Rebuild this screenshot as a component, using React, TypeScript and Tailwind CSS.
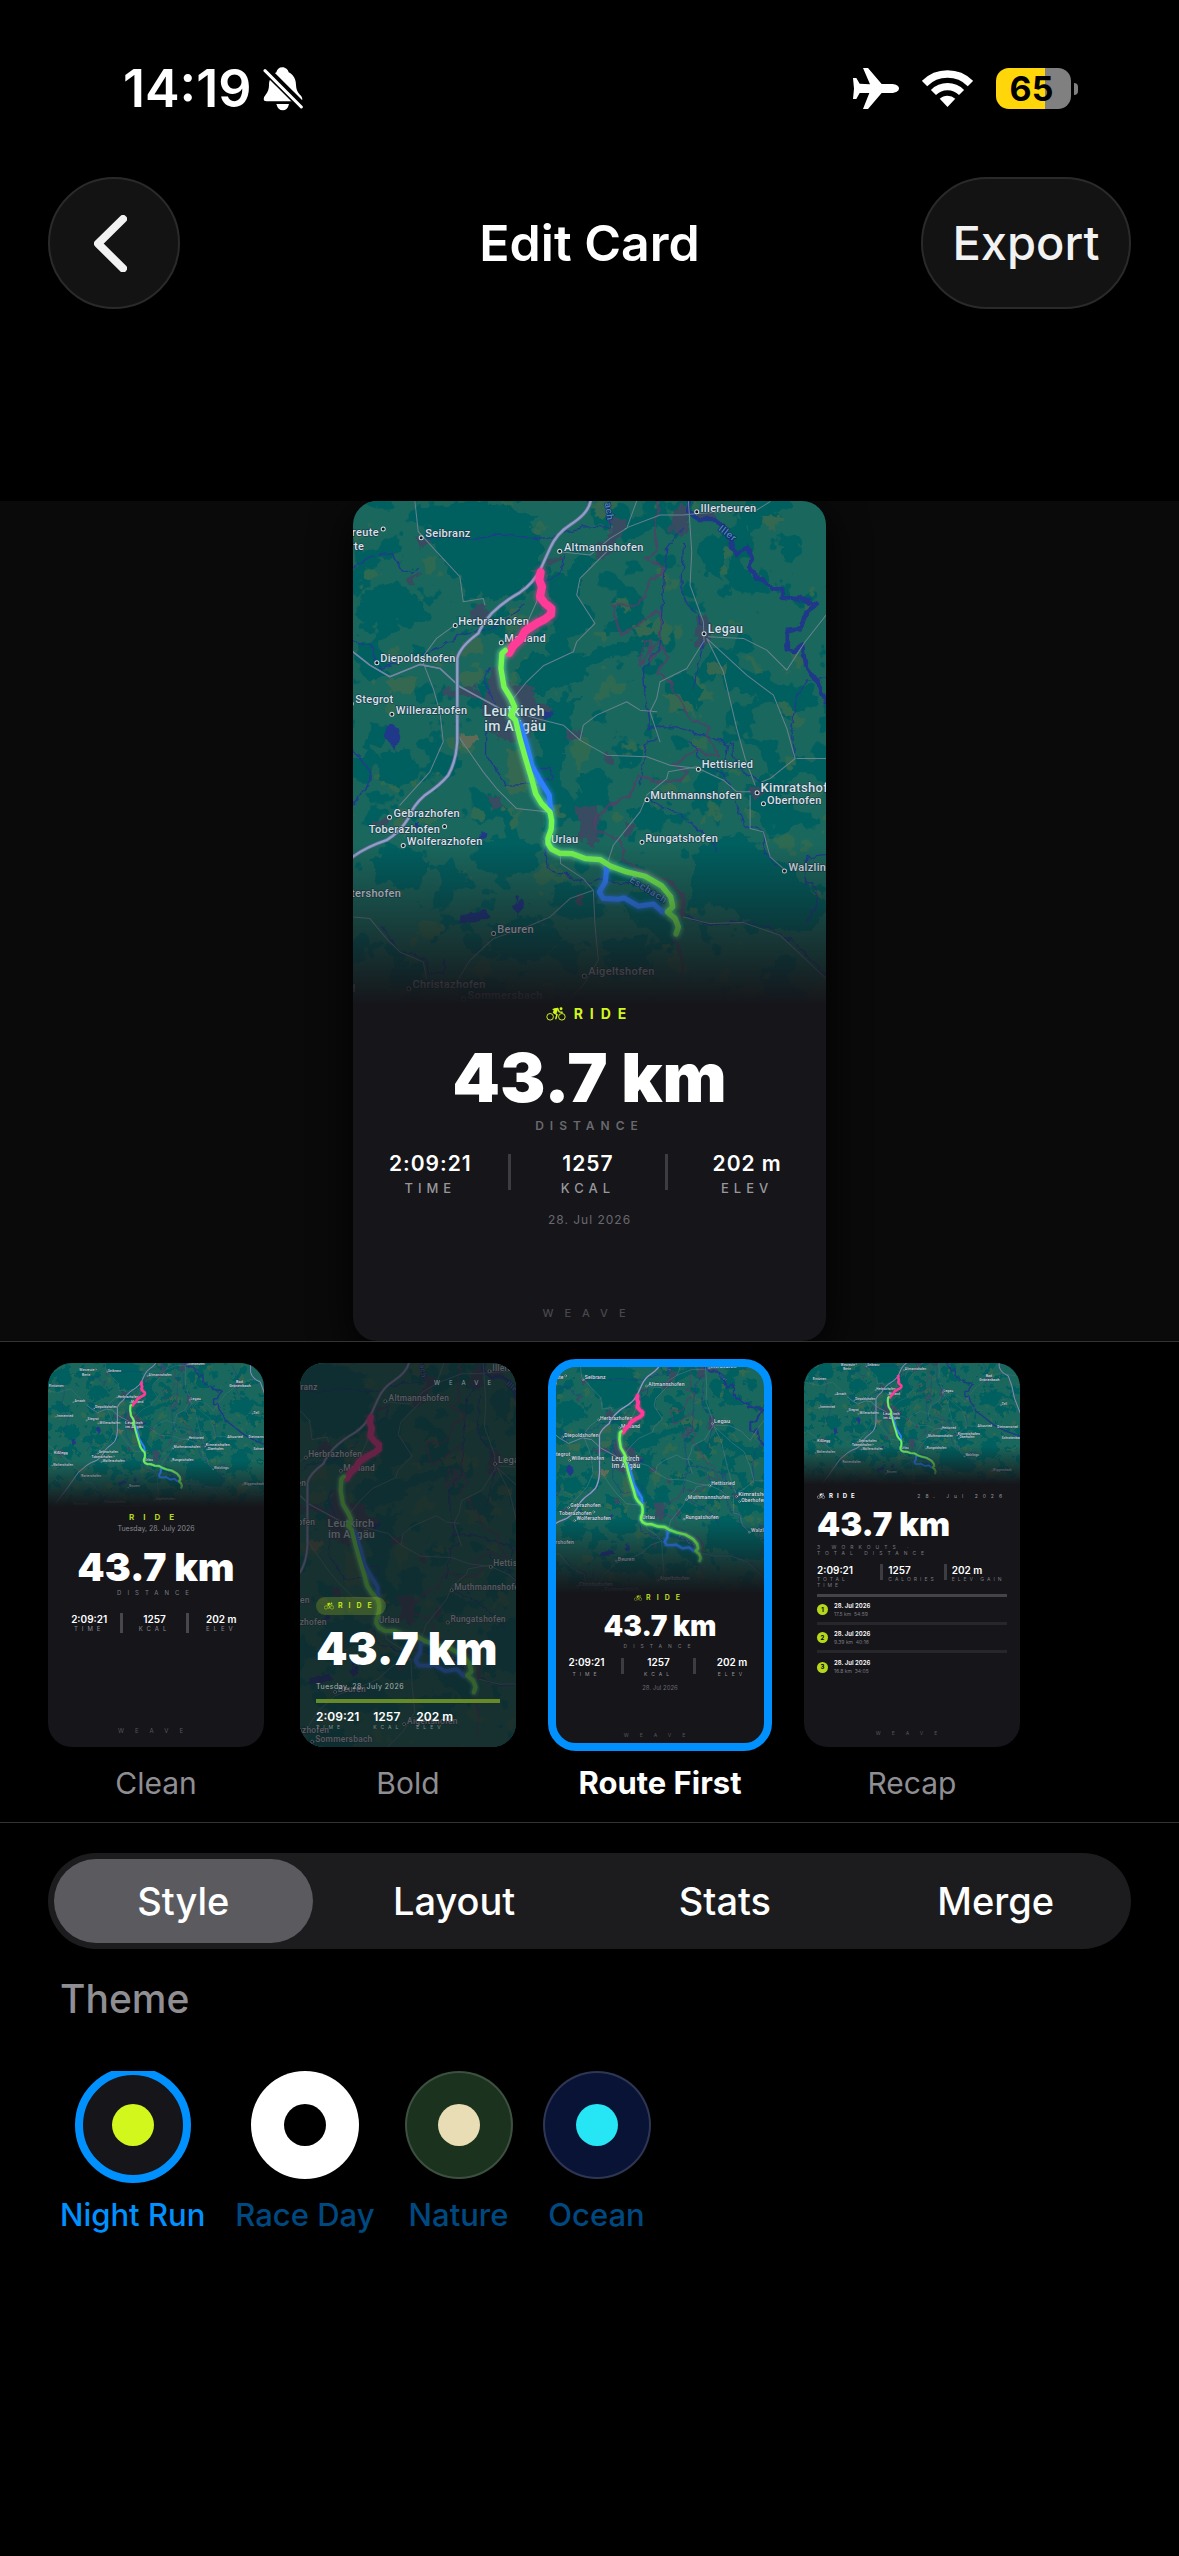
import { useState } from 'react';
import clsx from 'clsx';

type TemplateId = 'clean' | 'bold' | 'route' | 'recap';
type Place = { x: number; y: number; name: string; size?: number; end?: boolean; dot?: [number, number] };

const TABS = ['Style', 'Layout', 'Stats', 'Merge'];

const THEMES = [
  { name: 'Night Run', bg: 'bg-[#15151a]', dot: 'bg-[#d2f71d]' },
  { name: 'Race Day', bg: 'bg-white', dot: 'bg-black' },
  { name: 'Nature', bg: 'bg-[#1b321e]', dot: 'bg-[#e9ddb5]' },
  { name: 'Ocean', bg: 'bg-[#091335]', dot: 'bg-[#26e6f5]' }
];

const STATS = [
  { value: '2:09:21', label: 'TIME', long: ['TOTAL', 'TIME'] },
  { value: '1257', label: 'KCAL', long: ['CALORIES'] },
  { value: '202 m', label: 'ELEV', long: ['ELEV GAIN'] }
];

const WORKOUTS = [
  { date: '28. Jul 2026', km: '17.5 km', time: '54:59' },
  { date: '28. Jul 2026', km: '9.39 km', time: '40:16' },
  { date: '28. Jul 2026', km: '16.8 km', time: '34:05' }
];

const FORESTS = [
  'M235,60 L330,20 470,30 560,60 540,110 590,140 560,230 510,280 430,320 400,300 350,320 330,250 270,190 235,150Z',
  'M570,260 L640,230 700,180 740,190 690,260 690,310 740,370 700,420 640,430 600,390 620,340Z',
  'M500,520 L560,470 680,480 780,450 900,420 890,470 780,480 700,540 620,590 560,600 520,580Z',
  'M560,640 L640,620 700,600 660,660 640,800 590,800 560,720Z',
  'M40,280 L130,260 200,300 240,370 180,400 100,360 60,400 20,360Z',
  'M850,70 L900,60 920,100 860,120 840,100Z',
  'M1040,140 L1100,110 1130,190 1110,260 1060,230Z',
  'M1180,30 L1260,20 1270,70 1200,110 1170,80Z',
  'M1290,130 L1340,140 1345,190 1300,195Z',
  'M1080,500 L1140,460 1180,520 1260,540 1280,620 1200,600 1120,570Z',
  'M960,560 L1010,520 1060,580 1040,640 980,620Z',
  'M690,840 L740,810 780,850 770,910 700,920 680,880Z',
  'M830,950 L900,930 960,960 930,1010 860,1000Z',
  'M380,1040 L480,1020 570,1060 560,1130 440,1140 370,1100Z',
  'M60,1080 L180,1060 240,1110 200,1180 90,1160Z',
  'M620,1160 L740,1180 760,1260 660,1280 600,1230Z',
  'M860,1180 L940,1220 920,1290 840,1270 810,1220Z',
  'M1040,1060 L1160,1010 1260,1080 1340,1130 1420,1230 1380,1310 1240,1300 1120,1240 1020,1200Z',
  'M1180,880 L1240,840 1300,880 1280,950 1200,940Z',
  'M420,1290 L560,1260 640,1330 560,1400 440,1390Z',
  'M760,1340 L880,1320 900,1420 800,1460Z',
  'M90,780 L180,760 210,830 150,880 80,850Z',
  'M-320,120 L-220,80 -140,160 -180,260 -300,240Z',
  'M-240,700 L-120,660 -60,760 -130,840 -220,800Z',
  'M1520,420 L1660,380 1720,480 1640,580 1530,520Z',
  'M1480,980 L1600,940 1700,1040 1640,1160 1500,1120Z'
];

const MEADOWS = [
  'M730,35 L790,25 785,60 740,75Z',
  'M330,440 L390,430 400,470 340,480Z',
  'M470,340 L510,345 505,372 465,370Z',
  'M790,320 L830,305 845,340 810,352Z',
  'M100,555 L200,545 190,600 130,590Z',
  'M330,540 L400,520 395,570 340,580Z',
  'M470,760 L540,765 530,890 475,900Z',
  'M1070,510 L1120,500 1125,535 1080,540Z',
  'M940,590 L1010,610 1025,655 960,640Z',
  'M1240,55 L1300,70 1280,110 1240,90Z',
  'M850,400 L900,380 905,420 860,430Z',
  'M140,940 L175,950 165,1030 140,1010Z',
  'M1540,1300 L1640,1260 1660,1360 1560,1380Z'
];

const TOWNS = [
  'M780,65 L815,70 825,110 790,140 770,190 730,185 745,150 785,120Z',
  'M980,40 L1010,25 1015,100 990,130 960,95Z',
  'M1030,50 L1070,40 1100,65 1060,85Z',
  'M200,120 L230,125 235,150 205,155Z',
  'M585,200 L620,180 640,165 640,185 600,215Z',
  'M360,345 L400,325 420,360 390,400 365,380Z',
  'M420,520 L455,510 480,580 530,570 560,620 600,630 580,670 520,740 440,730 390,640 415,600Z',
  'M290,585 L370,575 395,620 330,600 290,610Z',
  'M1045,360 L1075,365 1085,430 1060,455 1035,440Z',
  'M650,700 L690,705 695,730 655,740Z',
  'M410,910 L460,900 465,935 430,950Z',
  'M680,935 L745,930 750,985 735,1050 690,1025Z',
  'M820,985 L855,990 845,1015 820,1020Z',
  'M1200,880 L1235,870 1235,910 1205,915Z',
  'M680,1200 L710,1200 700,1235 675,1220Z',
  'M755,775 L790,770 785,800 765,800Z',
  'M170,250 L210,230 205,245 185,275Z',
  'M75,975 L125,965 115,990 80,1000Z',
  'M-290,930 L-240,920 -220,990 -280,1000Z',
  'M1540,230 L1590,220 1600,280 1550,290Z'
];

const LAKES = [
  'M108,700 L130,688 152,720 140,770 118,740 105,725Z',
  'M335,1260 L410,1242 420,1262 390,1280 332,1284Z',
  'M485,1235 L515,1210 522,1240 500,1262Z',
  'M570,648 L610,652 590,675Z',
  'M388,1012 L410,1010 405,1030 390,1038Z',
  'M492,1203 L508,1205 500,1222Z',
  'M195,990 L208,980 206,1010Z',
  'M-150,820 L-120,815 -100,860 -140,880Z'
];

const STREAMS = [
  'M780,18 L778,100 700,95 640,115 570,132 500,122 430,120 370,130 300,122 225,130',
  'M9,220 L60,185 130,172 150,220 185,235 205,220',
  'M640,180 L635,230 605,250 570,265',
  'M9,440 L60,445 90,520 140,505 200,490 330,420 430,400 520,330',
  'M1000,100 L950,160 945,220 935,350 930,450 880,520 885,600 900,700 960,690 1040,715 1090,725 1135,750 1130,790',
  'M1000,145 L995,300 1060,390 M1060,440 L1030,580',
  'M1428,550 L1370,555 1340,600 1325,700 1335,790',
  'M420,515 L400,560 440,630 M410,690 L410,780 470,870 560,868 610,850 600,820 560,820',
  'M580,1030 L595,1120 650,1140 720,1165 750,1150 830,1165',
  'M1020,740 L1050,790 1120,840 1150,890 1180,990 1240,1005 1240,1060 1280,1110',
  'M1140,740 L1165,820 1230,860 M870,870 L890,740 920,735',
  'M895,915 L990,960 1060,1010 1100,1065',
  'M1428,1078 L1370,1085 1360,1160 1400,1180 1400,1230 1370,1280',
  'M9,765 L60,820 60,870 9,930',
  'M1010,1265 L1080,1290 1170,1280 1250,1295 1340,1350 1428,1440',
  'M100,1300 L150,1370 230,1390 235,1430 280,1440 285,1390',
  'M-300,200 L-220,320 -250,480 -180,600 -240,760',
  'M1500,60 L1560,180 1540,320 1620,420'
];

const ROADS = [
  'M195,18 L205,110 260,170 330,245 340,320 400,310 405,330',
  'M9,470 L60,510 120,545 210,508 270,520 330,575 440,635 560,670 640,690 690,735 700,690 740,660 830,620 870,645 920,650',
  'M315,390 L260,430 215,490 250,580 270,650 280,740 240,830 150,930',
  'M570,240 L560,320 520,410 M630,170 L720,180 780,130 830,100 860,18',
  'M780,160 L690,250 680,300 735,385 680,440 670,470 580,512 530,560 490,610',
  'M1015,18 L1025,170 1020,270 1060,380 1062,440',
  'M825,100 L930,60 1000,60 1050,55 1220,45 1260,20',
  'M1075,425 L1180,430 1250,465 1310,525 1365,440 1428,360',
  'M1070,430 L1120,530 1160,700 1185,790 1215,870 M1070,430 L1190,540 1270,600 1310,700 1335,790 1260,850 1235,860',
  'M1060,440 L1010,520 930,560 920,610 900,650 930,740',
  'M690,735 L770,780 890,785 960,810 1045,820 1120,855 1160,890 1200,890',
  'M890,905 L870,950 790,1050 770,1110 M890,900 L950,850 955,830 1040,815',
  'M330,730 L400,830 440,880 500,940 590,950',
  'M630,1070 L632,1105 700,1150 730,1185 735,1290 745,1395 700,1470 640,1530',
  'M730,1185 L660,1210 600,1265 530,1295 430,1330 360,1395 320,1460',
  'M9,1265 L60,1270 110,1330 150,1370 220,1400 230,1450',
  'M1428,790 L1340,790 M1200,900 L1200,1000 1240,1010 1260,1085 1300,1120',
  'M1000,1265 L1080,1285 1180,1282 1290,1320 1428,1450',
  'M-478,300 L-300,340 -160,300 9,470 M-478,820 L-280,960 -120,1100 9,1265',
  'M1428,360 L1560,260 1700,200 1922,240 M1440,1450 L1620,1360 1780,1400 1922,1340'
];

const BORDERS = [
  'M925,18 L915,110 920,170 880,190 935,210 940,240 895,260 890,300 850,330 785,325 800,380 810,420 860,390 915,350 930,350 930,430 870,510 880,440 905,430 900,500 935,450 955,490 920,530 960,560 1000,630 1030,680 1070,690 1085,750 1110,790 1040,765 970,810 1010,830 990,855 910,860 860,835 860,860 840,900 780,930 735,970 735,1010 790,1020 820,1050 815,1095 900,1140 960,1160 1000,1200 1000,1260 975,1290 975,1340 1000,1400 985,1490'
];

const MOTORWAY =
  'M722,18 C715,50 690,70 660,90 Q620,115 600,160 L572,222 Q550,265 510,292 Q460,320 425,355 Q395,390 385,415 Q330,455 322,490 L322,740 Q318,800 295,840 Q270,870 225,900 Q190,930 175,970 Q150,1010 110,1035 Q50,1055 9,1085 L-80,1160 -200,1330 -303,1465 -340,1532';

const MOTORWAY_EAST = 'M1690,18 L1690,130 Q1710,200 1790,230 L1830,340 1860,480 1922,640';

const ILLER =
  'M1015,18 L1015,50 1050,75 1100,75 1135,120 1160,180 1190,150 1205,190 1200,225 1250,270 1300,285 1295,305 1345,310 1395,325 1360,370 1350,400 1310,405 1310,460 1335,465 1355,450 1365,510 1410,570 1428,620 1520,690 1628,776 1765,845 1922,900';

const TRACK_PINK =
  'M572,232 L568,255 576,275 570,305 585,325 604,340 603,358 585,372 560,385 525,408 512,432 490,452 478,473';

const TRACK_BLUE = [
  'M497,672 L512,690 530,750 545,810 570,855 598,900 602,945',
  'M770,1118 L766,1160 748,1190 760,1210 805,1212 822,1208 865,1233 910,1226 937,1250'
];

const TRACK_GREEN =
  'M466,466 L456,475 453,520 462,575 483,610 494,635 482,660 497,675 510,730 527,790 545,850 557,895 575,925 600,950 605,975 604,1000 594,1030 594,1045 605,1062 628,1074 665,1075 705,1090 750,1093 780,1112 830,1130 885,1143 935,1172 962,1205 968,1235 952,1250 975,1270 985,1295 978,1316';

const PLACES: Place[] = [
  { x: 226, y: 126, name: 'Seibranz', dot: [214, 128] },
  { x: 87, y: 122, name: 'Wiesreute', end: true, dot: [100, 102] },
  { x: 43, y: 165, name: 'Berte', end: true },
  { x: 642, y: 168, name: 'Altmannshofen', dot: [629, 169] },
  { x: 1051, y: 51, name: 'Illerbeuren', dot: [1040, 50] },
  { x: 1073, y: 414, name: 'Legau', size: 37, dot: [1062, 416] },
  { x: 325, y: 390, name: 'Herbrazhofen', dot: [316, 391] },
  { x: 463, y: 442, name: 'Mailand', dot: [454, 443] },
  { x: 91, y: 502, name: 'Diepoldshofen', dot: [81, 503] },
  { x: 16, y: 625, name: 'Stegrot', dot: [4, 626] },
  { x: 138, y: 657, name: 'Willerazhofen', dot: [126, 657] },
  { x: 401, y: 663, name: 'Leutkirch', size: 42 },
  { x: 403, y: 707, name: 'im Allgäu', size: 42 },
  { x: 1055, y: 820, name: 'Hettisried', dot: [1045, 822] },
  { x: 1231, y: 891, name: 'Kimratshofen', size: 39, dot: [1221, 893] },
  { x: 1251, y: 926, name: 'Oberhofen', dot: [1240, 926] },
  { x: 901, y: 912, name: 'Muthmannshofen', dot: [891, 914] },
  { x: 886, y: 1040, name: 'Rungatshofen', dot: [876, 1041] },
  { x: 131, y: 965, name: 'Gebrazhofen', dot: [119, 966] },
  { x: 271, y: 1012, name: 'Toberazhofen', end: true, dot: [284, 994] },
  { x: 171, y: 1050, name: 'Wolferazhofen', dot: [160, 1051] },
  { x: 603, y: 1043, name: 'Urlau' },
  { x: 1315, y: 1126, name: 'Walzlings', dot: [1303, 1127] },
  { x: 154, y: 1205, name: 'Rattershofen', end: true },
  { x: 442, y: 1314, name: 'Beuren', dot: [431, 1315] },
  { x: 715, y: 1440, name: 'Aigeltshofen', dot: [703, 1442] },
  { x: 188, y: 1478, name: 'Christazhofen', dot: [177, 1480] },
  { x: 353, y: 1512, name: 'Sommersbach', dot: [341, 1511] },
  { x: 18, y: 1490, name: 'Eisenried', end: true },
  { x: -120, y: 440, name: 'Arnach', dot: [-132, 438] },
  { x: -300, y: 590, name: 'Immenried', dot: [-312, 588] },
  { x: -330, y: 970, name: 'Kißlegg', size: 40 },
  { x: -340, y: 1090, name: 'Waltershofen', dot: [-352, 1088] },
  { x: -380, y: 280, name: 'Eintürnen' },
  { x: 1540, y: 240, name: 'Bad', size: 40 },
  { x: 1470, y: 285, name: 'Grönenbach', size: 40 },
  { x: 1720, y: 560, name: 'Zell', dot: [1708, 558] },
  { x: 1450, y: 805, name: 'Altusried', size: 38 },
  { x: 1670, y: 810, name: 'Dietmannsried' },
  { x: 1720, y: 930, name: 'Schrattenbach' },
  { x: 1620, y: 1290, name: 'Wiggensbach', dot: [1608, 1288] }
];

type View = [number, number, number, number];

const CARD_VIEW: View = [9, 18, 1419, 1514];
const WIDE_VIEW: View = [-391, 18, 2219, 1514];
const RECAP_VIEW: View = [-478, 89, 2400, 1355];

/* Stylised route map. Cards crop it from the centre with "slice". */
function RouteMap({ className, view = CARD_VIEW }: { className?: string; view?: View }) {
  const [left, , width] = view;
  const places = PLACES.filter(p => p.x > left && p.x < left + width);

  return (
    <svg
      viewBox={view.join(' ')}
      preserveAspectRatio="xMidYMid slice"
      className={clsx('block w-full', className)}
      aria-label="Route map"
      role="img"
      fill="none"
      strokeLinejoin="round"
      strokeLinecap="round"
    >
      <defs>
        <filter id="woods" x="0" y="0" width="100%" height="100%" colorInterpolationFilters="sRGB">
          <feTurbulence type="fractalNoise" baseFrequency="0.009" numOctaves="4" seed="7" />
          <feColorMatrix values="0 0 0 0 0  0 0 0 0 0.375  0 0 0 0 0.375  40 0 0 0 -23.2" />
        </filter>
        <filter id="fields" x="0" y="0" width="100%" height="100%" colorInterpolationFilters="sRGB">
          <feTurbulence type="fractalNoise" baseFrequency="0.011" numOctaves="4" seed="23" />
          <feColorMatrix values="0 0 0 0 0.18  0 0 0 0 0.41  0 0 0 0 0.32  30 0 0 0 -20.6" />
        </filter>
        <filter id="rough" colorInterpolationFilters="sRGB">
          <feTurbulence type="fractalNoise" baseFrequency="0.03" numOctaves="3" seed="3" />
          <feDisplacementMap in="SourceGraphic" scale="46" xChannelSelector="R" yChannelSelector="G" />
        </filter>
        <filter id="wobble" colorInterpolationFilters="sRGB">
          <feTurbulence type="fractalNoise" baseFrequency="0.035" numOctaves="2" seed="11" />
          <feDisplacementMap in="SourceGraphic" scale="22" xChannelSelector="R" yChannelSelector="G" />
        </filter>
        <filter id="glow" x="-20%" y="-20%" width="140%" height="140%">
          <feGaussianBlur stdDeviation="7" />
        </filter>
      </defs>

      <rect x="-500" y="0" width="2440" height="1560" fill="#1a675d" />
      <rect x="-500" y="0" width="2440" height="1560" filter="url(#woods)" />
      <rect x="-500" y="0" width="2440" height="1560" filter="url(#fields)" />
      <g filter="url(#rough)">
        <path d={FORESTS.join(' ')} fill="#005f5f" />
        <path d={MEADOWS.join(' ')} fill="#346851" />
        <path d={TOWNS.join(' ')} fill="#384b60" />
        <path d="M330,715 L385,712 388,745 350,760 325,750Z" fill="#5f6b57" />
      </g>

      <g filter="url(#wobble)">
        <path d={LAKES.join(' ')} fill="#1f3889" />
        <path d={STREAMS.join(' ')} stroke="#1f3c8c" strokeWidth="4" />
        <path d={ILLER} stroke="#1f3889" strokeWidth="14" />
        <path d={BORDERS.join(' ')} stroke="#553f68" strokeWidth="7" opacity="0.75" />
      </g>
      <path d={ROADS.join(' ')} stroke="#68828e" strokeWidth="3" />
      <path d="M9,470 L60,510 120,545 210,508 270,520 330,575 440,635" stroke="#7486a4" strokeWidth="5" />
      <path d={MOTORWAY + ' ' + MOTORWAY_EAST} stroke="#53698c" strokeWidth="12" />
      <path d={MOTORWAY + ' ' + MOTORWAY_EAST} stroke="#919fc6" strokeWidth="7" />

      <g fontFamily="Roboto, sans-serif" fontWeight="500">
        {places.map(p => (
          <g key={p.name}>
            {p.dot && (
              <circle cx={p.dot[0]} cy={p.dot[1]} r="6" fill="#10181c" stroke="#d5dde3" strokeWidth="3" />
            )}
            <text
              x={p.x}
              y={p.y}
              fontSize={p.size ?? 33}
              textAnchor={p.end ? 'end' : 'start'}
              letterSpacing="1"
              fill="#d9e1e6"
              stroke="#1d3f4d"
              strokeWidth="4"
              paintOrder="stroke"
            >
              {p.name}
            </text>
          </g>
        ))}
        <g fontSize="30" fill="#4d84c4" stroke="#0d2c55" strokeWidth="4" paintOrder="stroke" letterSpacing="2">
          <text transform="translate(764 24) rotate(82)">ach</text>
          <text transform="translate(1103 104) rotate(38)">Iller</text>
          <text transform="translate(836 1158) rotate(32)">Eschach</text>
        </g>
      </g>

      <g filter="url(#glow)" opacity="0.65">
        <path d={TRACK_PINK} stroke="#ff3b97" strokeWidth="30" />
        <path d={TRACK_BLUE.join(' ')} stroke="#2f80ff" strokeWidth="22" />
        <path d={TRACK_GREEN} stroke="#6ff0a0" strokeWidth="26" />
      </g>
      <path d={TRACK_BLUE.join(' ')} stroke="#2f80ff" strokeWidth="15" />
      <path d={TRACK_PINK} stroke="#ff3b97" strokeWidth="24" />
      <path d={TRACK_GREEN} stroke="#74f550" strokeWidth="16" />
    </svg>
  );
}

/* Map that fades into the card body */
function FadedMap({ className, view }: { className?: string; view?: View }) {
  return (
    <div className="relative">
      <RouteMap className={className} view={view} />
      <div className="absolute inset-0 bg-linear-to-b from-transparent from-68% to-[#15151a]" />
    </div>
  );
}

function RideIcon({ className }: { className?: string }) {
  return (
    <svg viewBox="0 0 28 20" className={className} fill="none" stroke="currentColor" aria-hidden="true">
      <circle cx="5.6" cy="14" r="4.7" strokeWidth="1.4" />
      <circle cx="22.4" cy="14" r="4.7" strokeWidth="1.4" />
      <path d="M10 3.4 L16.2 2.2 L18.6 7 L22.8 7.4" strokeWidth="2" strokeLinecap="round" strokeLinejoin="round" />
      <path d="M11 8 L15.4 11 L13.8 16.6" strokeWidth="2.2" strokeLinecap="round" strokeLinejoin="round" />
      <path d="M11.6 2.6 L17 1.8 L14.6 8.6 L10 8.2Z" fill="currentColor" strokeWidth="0.8" strokeLinejoin="round" />
      <circle cx="21.2" cy="2.5" r="2.1" fill="currentColor" stroke="none" />
    </svg>
  );
}

function RouteCard() {
  return (
    <article className="flex h-[840px] w-[473px] flex-col overflow-hidden rounded-3xl bg-[#15151a] shadow-[0_12px_40px_black]">
      <FadedMap className="h-[505px]" />
      <div className="flex h-4 items-center justify-center gap-2 text-[#d2f71d]">
        <RideIcon className="h-3.5 w-5" />
        <span className="text-[14px] leading-4 font-bold tracking-[7px]">RIDE</span>
      </div>
      <p className="mt-5 text-center text-[68px] leading-[70px] font-black">43.7 km</p>
      <p className="mt-2 text-center text-[12px] leading-3 font-semibold tracking-[6px] text-[#69696d]">DISTANCE</p>
      <dl className="mt-[22px] grid grid-cols-3 divide-x-3 divide-[#3c3c41] text-center">
        {STATS.map(s => (
          <div key={s.label} className="flex h-9 flex-col gap-2">
            <dt className="order-last text-[13px] leading-3 font-medium tracking-[5px] text-[#98989c]">{s.label}</dt>
            <dd className="text-[21px] leading-5 font-semibold tracking-[1px]">{s.value}</dd>
          </div>
        ))}
      </dl>
      <p className="mt-6 text-center text-[12px] leading-3 tracking-[1px] text-[#69696d]">28. Jul 2026</p>
      <p className="mt-auto mb-[22px] text-center text-[11px] leading-3 font-medium tracking-[11px] text-[#48484c]">WEAVE</p>
    </article>
  );
}

function CleanThumb() {
  return (
    <div className="flex h-full flex-col text-center">
      <FadedMap className="h-[144px]" view={WIDE_VIEW} />
      <p className="mt-1.5 text-[8px] leading-2 font-bold tracking-[9px] text-[#b5d81d]">RIDE</p>
      <p className="mt-1 text-[7px] leading-2 text-[#8a8a8e]">Tuesday, 28. July 2026</p>
      <p className="mt-3.5 text-[39px] leading-10 font-black">43.7 km</p>
      <p className="mt-0.5 text-[6px] leading-2 tracking-[6px] text-[#7c7c80]">DISTANCE</p>
      <div className="mt-4 grid grid-cols-3 divide-x-3 divide-[#48484c] px-2.5">
        {STATS.map(s => (
          <div key={s.label} className="flex h-5 flex-col justify-between">
            <span className="text-[10px] leading-3 font-semibold">{s.value}</span>
            <span className="text-[6px] leading-2 tracking-[4px] text-[#8a8a8e]">{s.label}</span>
          </div>
        ))}
      </div>
      <p className="mt-auto mb-3 text-[6px] leading-2 tracking-[11px] text-[#58585c]">WEAVE</p>
    </div>
  );
}

function BoldThumb() {
  return (
    <div className="relative h-full">
      <RouteMap className="h-full" />
      <div className="absolute inset-0 flex flex-col bg-[#15151a]/66 px-4">
        <p className="mt-4 text-right text-[6px] leading-2 tracking-[9px] text-[#8b9a9c]">WEAVE</p>
        <div className="mt-auto flex h-[18px] items-center gap-1 self-start rounded-full bg-[#d2f71d]/20 px-2 text-[#c2e31d]">
          <RideIcon className="h-2 w-2.5" />
          <span className="text-[7px] leading-2 font-bold tracking-[6px]">RIDE</span>
        </div>
        <p className="mt-3 text-[45px] leading-11 font-black whitespace-nowrap">43.7 km</p>
        <p className="mt-3 text-[7px] leading-2 tracking-[0.5px] text-[#a9b1b2]">Tuesday, 28. July 2026</p>
        <div className="mt-2 h-1 bg-[#668a28]" />
        <div className="mt-2 mb-4 flex gap-3.5">
          {STATS.map(s => (
            <div key={s.label}>
              <p className="text-[12px] leading-3 font-semibold">{s.value}</p>
              <p className="text-[5px] leading-2 tracking-[4px] text-[#84908f]">{s.label}</p>
            </div>
          ))}
        </div>
      </div>
    </div>
  );
}

function RouteThumb() {
  return (
    <div className="flex h-full flex-col text-center">
      <FadedMap className="h-[231px]" />
      <div className="flex h-2 items-center justify-center gap-1 text-[#b5d81d]">
        <RideIcon className="h-1.5 w-2" />
        <span className="text-[7px] leading-2 font-bold tracking-[6px]">RIDE</span>
      </div>
      <p className="mt-2.5 text-[28px] leading-7 font-black">43.7 km</p>
      <p className="mt-0.5 text-[5px] leading-2 tracking-[6px] text-[#7c7c80]">DISTANCE</p>
      <div className="mt-2 grid grid-cols-3 divide-x-3 divide-[#3c3c41]">
        {STATS.map(s => (
          <div key={s.label} className="flex h-4 flex-col">
            <span className="text-[10px] leading-2 font-semibold">{s.value}</span>
            <span className="mt-1 text-[5px] leading-2 tracking-[4px] text-[#98989c]">{s.label}</span>
          </div>
        ))}
      </div>
      <p className="mt-2.5 text-[6px] leading-2 text-[#69696d]">28. Jul 2026</p>
      <p className="mt-auto mb-2 text-[5px] leading-2 tracking-[11px] text-[#58585c]">WEAVE</p>
    </div>
  );
}

function RecapThumb() {
  return (
    <div className="flex h-full flex-col">
      <FadedMap className="h-[122px]" view={RECAP_VIEW} />
      <div className="flex flex-1 flex-col px-[13px]">
        <div className="mt-[7px] flex h-2 items-center gap-1 whitespace-nowrap">
          <RideIcon className="h-1.5 w-2" />
          <span className="text-[6px] leading-2 font-bold tracking-[4px]">RIDE</span>
          <span className="ml-auto text-[5px] leading-2 tracking-[5px] text-[#98989c]">28. Jul 2026</span>
        </div>
        <p className="mt-2 text-[33px] leading-8 font-black">43.7 km</p>
        <p className="mt-1 text-[5px] leading-1.5 tracking-[5px] text-[#7c7c80]">
          3 WORKOUTS ·<br />
          TOTAL DISTANCE
        </p>
        <div className="mt-2 grid grid-cols-3">
          {STATS.map((s, i) => (
            <div key={s.label} className={clsx('relative', i > 0 && 'pl-2')}>
              {i > 0 && <span className="absolute top-0 left-0 h-4 w-[3px] bg-[#3c3c41]" />}
              <p className="text-[10px] leading-3 font-semibold">{s.value}</p>
              {s.long.map(line => (
                <p key={line} className="text-[5px] leading-1.5 tracking-[3px] whitespace-nowrap text-[#7c7c80]">
                  {line}
                </p>
              ))}
            </div>
          ))}
        </div>
        <div className="mt-1.5 h-[3px] shrink-0 bg-[#444448]" />
        <ol className="divide-y-3 divide-[#27272b]">
          {WORKOUTS.map((w, i) => (
            <li key={w.time} className="flex h-7 items-center gap-1.5">
              <span className="flex size-[11px] items-center justify-center rounded-full bg-[#b5d81d] text-[6px] leading-2 font-bold text-black">
                {i + 1}
              </span>
              <span className="flex flex-col">
                <span className="text-[6px] leading-2 font-semibold">{w.date}</span>
                <span className="text-[5px] leading-2 whitespace-pre text-[#7c7c80]">
                  {w.km}  {w.time}
                </span>
              </span>
            </li>
          ))}
        </ol>
        <p className="mt-auto mb-2.5 text-center text-[5px] leading-2 tracking-[11px] text-[#58585c]">WEAVE</p>
      </div>
    </div>
  );
}

const TEMPLATES: { id: TemplateId; label: string; Thumb: () => React.JSX.Element }[] = [
  { id: 'clean', label: 'Clean', Thumb: CleanThumb },
  { id: 'bold', label: 'Bold', Thumb: BoldThumb },
  { id: 'route', label: 'Route First', Thumb: RouteThumb },
  { id: 'recap', label: 'Recap', Thumb: RecapThumb }
];

function StatusBar() {
  return (
    <div className="flex h-[177px] items-center justify-between pr-[101px] pl-[123px]">
      <div className="flex items-center gap-3">
        <span className="text-[52px] leading-[60px] font-semibold">14:19</span>
        <svg viewBox="700 50 120 132" className="h-11 w-10" aria-label="Silent mode" role="img">
          <path
            d="M758,51 C768,51 775,58 777,66 C792,73 799,88 799,104 C800,120 805,128 814,136 Q818,141 818,147 Q818,153 811,153 L710,153 Q702,153 702,147 Q702,139 708,133 C715,125 718,115 718,104 C718,88 727,73 740,66 C742,57 748,51 758,51Z M740,161 L778,161 Q774,180 759,180 Q745,180 740,161Z"
            fill="white"
          />
          <path d="M700,50 L826,176" stroke="black" strokeWidth="25" />
          <path d="M706,61 L815,170" stroke="white" strokeWidth="9" strokeLinecap="round" />
        </svg>
      </div>
      <div className="flex items-center gap-[23px]">
        <svg viewBox="72 54 138 123" className="h-[41px] w-[46px]" fill="white" aria-label="Airplane mode" role="img">
          <path d="M72,84 L82,84 92,101 123,103 102,54 117,54 158,102 190,102 C203,103 210,109 210,115 C210,122 203,128 190,129 L158,129 117,177 102,177 121,129 92,129 82,147 72,147 75,116Z" />
        </svg>
        <svg viewBox="279 56 153 112" className="h-[37px] w-[51px]" fill="none" stroke="white" aria-label="Wi-Fi" role="img">
          <path d="M286,97 A98.5,98.5 0 0 1 425,97" strokeWidth="23" />
          <path d="M313,124 A60.5,60.5 0 0 1 398,124" strokeWidth="22" />
          <path d="M355.5,168 L332,143 A34,34 0 0 1 379,143Z" fill="white" stroke="none" />
        </svg>
        <div className="flex items-center gap-[3px]">
          <div className="flex h-[41px] w-[75px] items-center justify-center rounded-[13px] bg-linear-to-r from-[#ffd60a] from-65% to-[#808080] to-65% pr-1 text-[34px] leading-10 font-bold text-black">
            65
          </div>
          <span className="h-3 w-1 rounded-r-full bg-[#808080]" />
        </div>
      </div>
    </div>
  );
}

export default function App() {
  const [template, setTemplate] = useState<TemplateId>('route');
  const [tab, setTab] = useState('Style');
  const [theme, setTheme] = useState('Night Run');

  return (
    <main className="min-h-screen bg-black font-[Inter,sans-serif] text-white">
      <StatusBar />

      {/* Header */}
      <header className="grid grid-cols-[1fr_auto_1fr] items-center px-12">
        <button
          aria-label="Back"
          className="flex size-33 items-center justify-center rounded-full border-2 border-[#2a2a2a] bg-[#131313]"
        >
          <svg viewBox="189 495 99 171" className="mr-2 h-[57px] w-[33px]" fill="none" aria-hidden="true">
            <path d="M276,507 L201,581 276,655" stroke="#f2f2f2" strokeWidth="24" strokeLinecap="round" strokeLinejoin="round" />
          </svg>
        </button>
        <h1 className="text-[50px] leading-[60px] font-semibold">Edit Card</h1>
        <button className="flex h-33 w-[210px] items-center justify-center justify-self-end rounded-full border-2 border-[#2a2a2a] bg-[#131313] text-[47px] leading-[60px] font-medium text-[#f2f2f2]">
          Export
        </button>
      </header>

      {/* Preview */}
      <section className="mt-48 flex justify-center overflow-hidden bg-[#0a0a0a]" aria-label="Preview">
        <RouteCard />
      </section>

      {/* Templates */}
      <section className="flex gap-9 overflow-x-auto border-y border-[#333336] px-12 pt-[21px] pb-[19px]" aria-label="Templates">
        {TEMPLATES.map(({ id, label, Thumb }) => (
          <button
            key={id}
            onClick={() => setTemplate(id)}
            aria-pressed={template === id}
            className="flex w-[216px] shrink-0 flex-col items-center gap-4 text-left"
          >
            <div className="relative aspect-9/16 w-full">
              <div className="h-full overflow-hidden rounded-3xl bg-[#15151a]">
                <Thumb />
              </div>
              {template === id && <div className="absolute -inset-1 rounded-[28px] border-8 border-[#0091ff]" />}
            </div>
            <span
              className={clsx(
                'leading-10 whitespace-nowrap',
                template === id ? 'text-[31px] font-bold text-white' : 'text-[30px] text-[#8e8e93]'
              )}
            >
              {label}
            </span>
          </button>
        ))}
      </section>

      {/* Tabs */}
      <div className="mx-12 mt-[30px] grid h-24 grid-cols-4 gap-3 rounded-full bg-[#1c1c1e] p-1.5">
        {TABS.map(t => (
          <button
            key={t}
            onClick={() => setTab(t)}
            className={clsx('rounded-full text-[38px] leading-[48px] font-medium', tab === t && 'bg-[#5b5b5f]')}
          >
            {t}
          </button>
        ))}
      </div>

      {/* Themes */}
      <section className="mt-[26px]">
        <h2 className="px-15 text-[39px] leading-[48px] font-medium text-[#8e8e93]">Theme</h2>
        <div className="mt-12 flex gap-[30px] overflow-x-auto px-15 pb-4">
          {THEMES.map(t => (
            <button
              key={t.name}
              onClick={() => setTheme(t.name)}
              aria-pressed={theme === t.name}
              className="flex min-w-[108px] flex-col items-center gap-4"
            >
              <span
                className={clsx(
                  'flex size-[108px] items-center justify-center rounded-full',
                  t.bg,
                  theme === t.name ? 'outline-8 -outline-offset-4 outline-[#0091ff]' : 'border-2 border-white/15'
                )}
              >
                <span className={clsx('size-[42px] rounded-full', t.dot)} />
              </span>
              <span
                className={clsx(
                  'text-[31px] leading-10 font-medium whitespace-nowrap',
                  theme === t.name ? 'text-[#0091ff]' : 'text-[#004980]'
                )}
              >
                {t.name}
              </span>
            </button>
          ))}
        </div>
      </section>
    </main>
  );
}
